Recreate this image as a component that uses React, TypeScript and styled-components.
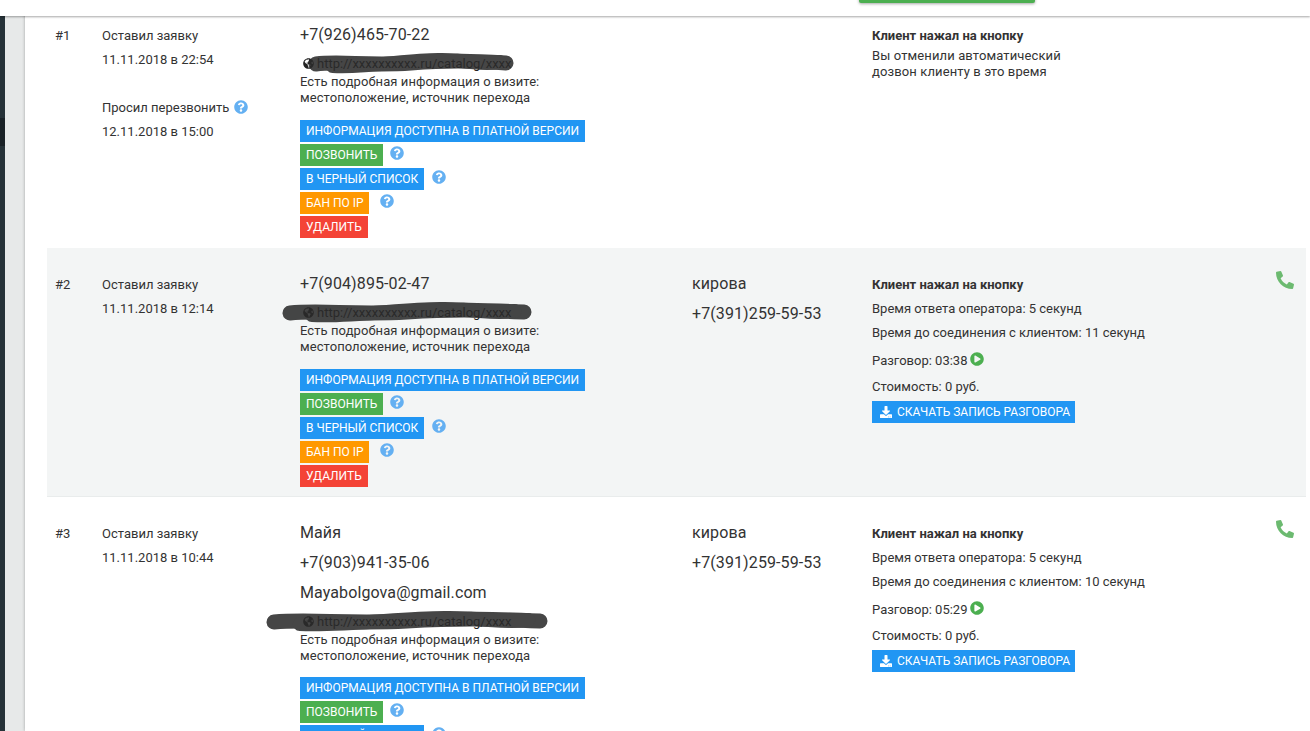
import * as React from 'react';
import styled, { createGlobalStyle } from 'styled-components';
import { FaDownload, FaGlobeAmericas, FaPhone, FaPlayCircle, FaQuestionCircle } from 'react-icons/fa';

const GlobalStyle = createGlobalStyle`
    html, body {
        margin: 0;
        padding: 0;
        height: 100%;
        overflow: hidden;
        background: white;
    }
    body {
        font-family: Roboto, "Liberation Sans", sans-serif;
        font-size: 13px;
        color: #333;
    }
`;

const Page = styled.div`
    position: relative;
    display: flex;
    height: 731px;
    overflow: hidden;
`;
const TopBar = styled.div`
    position: absolute;
    top: 0;
    left: 0;
    right: 0;
    height: 16px;
    background: white;
    box-shadow: 0 1px 2px rgba(0,0,0,0.35);
    z-index: 5;
`;
const TopButton = styled.div`
    position: absolute;
    top: -10px;
    left: 859px;
    width: 176px;
    height: 13px;
    background: #4caf50;
    border-radius: 2px;
    box-shadow: 0 1px 3px rgba(0,0,0,0.35);
`;
const SideBar = styled.div`
    width: 5px;
    flex: none;
    background: linear-gradient(#263238 118px, #1a2227 118px, #1a2227 146px, #263238 146px);
`;
const Gutter = styled.div`
    width: 20px;
    flex: none;
    background: #e7e9e9;
`;
const Content = styled.div`
    flex: 1;
    margin-top: -1px;
    padding: 0 4px 0 22px;
    background: white;
    box-shadow: 0 0 3px rgba(0,0,0,0.3);
`;
const Actions = styled.div`
    display: flex;
    flex-direction: column;
    align-items: flex-start;
    gap: 2px;
`;
const Row = styled.div<{ $shaded?: boolean }>`
    display: grid;
    grid-template-columns: 47px 198px 392px 180px 404px 1fr;
    box-sizing: border-box;
    height: 249px;
    padding: 25px 0 0 8px;
    background: ${p => (p.$shaded ? '#f3f5f5' : 'white')};
    border-bottom: 1px solid ${p => (p.$shaded ? '#e9ecec' : 'transparent')};
    &:last-child {
        height: 300px;
    }
    &:last-child ${Actions} {
        margin-top: -1px;
    }
`;
const Index = styled.div`
    font-size: 13px;
    line-height: 24px;
`;
const Line = styled.div`
    line-height: 24px;
    white-space: nowrap;
`;
const Gap = styled.div`
    height: 24px;
`;
const Contact = styled.div`
    font-size: 16px;
    line-height: 30px;
    letter-spacing: 0.1px;
    white-space: nowrap;
    &:first-child {
        margin-top: -4px;
    }
`;
const LinkRow = styled.div`
    position: relative;
    display: flex;
    align-items: center;
    gap: 3px;
    height: 18px;
    margin-top: 4px;
    color: #222;
    padding-left: 3px;
    white-space: nowrap;
`;
const Scribble = styled.svg<{ $left: number; $width: number }>`
    position: absolute;
    top: -5px;
    left: ${p => p.$left}px;
    width: ${p => p.$width}px;
    height: 28px;
    opacity: 0.87;
    filter: blur(0.7px);
    pointer-events: none;
`;
const Note = styled.div`
    line-height: 16px;
    letter-spacing: 0.08px;
    margin-top: 2px;
    margin-bottom: 14px;
`;
const ActionRow = styled.div`
    display: flex;
    align-items: flex-start;
`;
const Action = styled.div<{ $color: string }>`
    display: flex;
    align-items: center;
    height: 22px;
    padding: 0 6px;
    background: ${p => p.$color};
    color: white;
    font-size: 12px;
    white-space: nowrap;
    text-transform: uppercase;
`;
const BanAction = styled(Action)`
    padding-right: 5px;
`;
const DownloadAction = styled(Action)`
    gap: 5px;
    padding: 0 5px 0 8px;
`;
const Help = styled(FaQuestionCircle)<{ $offset: number }>`
    color: #64b0f2;
    width: 14px;
    height: 14px;
    margin: 2px 0 0 ${p => p.$offset}px;
`;
const InlineHelp = styled(FaQuestionCircle)`
    color: #64b0f2;
    width: 14px;
    height: 14px;
    margin-left: 5px;
    vertical-align: -2px;
`;
const Bold = styled.div`
    font-weight: 700;
    line-height: 24px;
`;
const Pair = styled.div`
    line-height: 16px;
    letter-spacing: 0.12px;
`;
const TalkLine = styled.div`
    line-height: 24px;
    margin-top: 4px;
    margin-bottom: 2px;
`;
const Play = styled(FaPlayCircle)`
    color: #4caf50;
    width: 14px;
    height: 14px;
    margin-left: 3px;
    vertical-align: -1px;
`;
const CostLine = styled.div`
    line-height: 24px;
    margin-bottom: 2px;
`;
const CallIcon = styled(FaPhone)`
    color: #6cba70;
    width: 18px;
    height: 18px;
    transform: scaleX(-1);
    margin-top: -2px;
`;

interface Scrawl {
    left: number;
    width: number;
}

interface CallInfo {
    answer: string;
    connect: string;
    talk: string;
}

interface ItemProps {
    num: number;
    date: string;
    callback?: string;
    name?: string;
    phone: string;
    email?: string;
    scrawl: Scrawl;
    city?: string;
    cityPhone?: string;
    call?: CallInfo;
    shaded?: boolean;
}

// hand drawn marker over the address, two passes so the edge stays lumpy
const Scrawled: React.FC<Scrawl> = ({ left, width }) => (
    <Scribble $left={left} $width={width} viewBox={`0 0 ${width} 28`} preserveAspectRatio="none">
        <path
            d={`M8 15 C ${width * 0.15} 12, ${width * 0.3} 17, ${width * 0.5} 14 S ${width * 0.8} 12, ${width - 8} 14`}
            stroke="#2b2b2b"
            strokeWidth="15"
            strokeLinecap="round"
            fill="none"
        />
        <path
            d={`M${width * 0.12} 17 C ${width * 0.3} 19, ${width * 0.5} 10, ${width * 0.65} 11 S ${width * 0.85} 16, ${width * 0.93} 13`}
            stroke="#2b2b2b"
            strokeWidth="14"
            strokeLinecap="round"
            fill="none"
        />
    </Scribble>
);

const Item: React.FC<ItemProps> = props => {
    const { num, date, callback, name, phone, email, scrawl, city, cityPhone, call, shaded } = props;
    return (
        <Row $shaded={shaded}>
            <Index>#{num}</Index>
            <div>
                <Line>Оставил заявку</Line>
                <Line>{date}</Line>
                {callback && (
                    <>
                        <Gap />
                        <Line>
                            Просил перезвонить
                            <InlineHelp />
                        </Line>
                        <Line>{callback}</Line>
                    </>
                )}
            </div>
            <div>
                {name && <Contact>{name}</Contact>}
                <Contact>{phone}</Contact>
                {email && <Contact>{email}</Contact>}
                <LinkRow>
                    <FaGlobeAmericas size={11} />
                    <span>http://xxxxxxxxxx.ru/catalog/xxxx</span>
                    <Scrawled {...scrawl} />
                </LinkRow>
                <Note>
                    Есть подробная информация о визите:
                    <br />
                    местоположение, источник перехода
                </Note>
                <Actions>
                    <Action $color="#2196f3">Информация доступна в платной версии</Action>
                    <ActionRow>
                        <Action $color="#4caf50">Позвонить</Action>
                        <Help $offset={7} />
                    </ActionRow>
                    <ActionRow>
                        <Action $color="#2196f3">В черный список</Action>
                        <Help $offset={8} />
                    </ActionRow>
                    <ActionRow>
                        <BanAction $color="#ff9800">Бан по IP</BanAction>
                        <Help $offset={11} />
                    </ActionRow>
                    <Action $color="#f44336">Удалить</Action>
                </Actions>
            </div>
            <div>
                {city && <Contact>{city}</Contact>}
                {cityPhone && <Contact>{cityPhone}</Contact>}
            </div>
            <div>
                <Bold>Клиент нажал на кнопку</Bold>
                {call ? (
                    <>
                        <Line>Время ответа оператора: {call.answer}</Line>
                        <Line>Время до соединения с клиентом: {call.connect}</Line>
                        <TalkLine>
                            Разговор: {call.talk}
                            <Play />
                        </TalkLine>
                        <CostLine>Стоимость: 0 руб.</CostLine>
                        <ActionRow>
                            <DownloadAction $color="#2196f3">
                                <FaDownload size={12} />
                                Скачать запись разговора
                            </DownloadAction>
                        </ActionRow>
                    </>
                ) : (
                    <Pair>
                        Вы отменили автоматический
                        <br />
                        дозвон клиенту в это время
                    </Pair>
                )}
            </div>
            <div>{call && <CallIcon />}</div>
        </Row>
    );
};

const App: React.FC = () => (
    <Page>
        <GlobalStyle />
        <TopBar>
            <TopButton />
        </TopBar>
        <SideBar />
        <Gutter />
        <Content>
            <Item
                num={1}
                date="11.11.2018 в 22:54"
                callback="12.11.2018 в 15:00"
                phone="+7(926)465-70-22"
                scrawl={{ left: 8, width: 206 }}
            />
            <Item
                num={2}
                shaded
                date="11.11.2018 в 12:14"
                phone="+7(904)895-02-47"
                scrawl={{ left: -18, width: 250 }}
                city="кирова"
                cityPhone="+7(391)259-59-53"
                call={{ answer: '5 секунд', connect: '11 секунд', talk: '03:38' }}
            />
            <Item
                num={3}
                date="11.11.2018 в 10:44"
                name="Майя"
                phone="+7(903)941-35-06"
                email="Mayabolgova@gmail.com"
                scrawl={{ left: -34, width: 282 }}
                city="кирова"
                cityPhone="+7(391)259-59-53"
                call={{ answer: '5 секунд', connect: '10 секунд', talk: '05:29' }}
            />
        </Content>
    </Page>
);

export default App;
